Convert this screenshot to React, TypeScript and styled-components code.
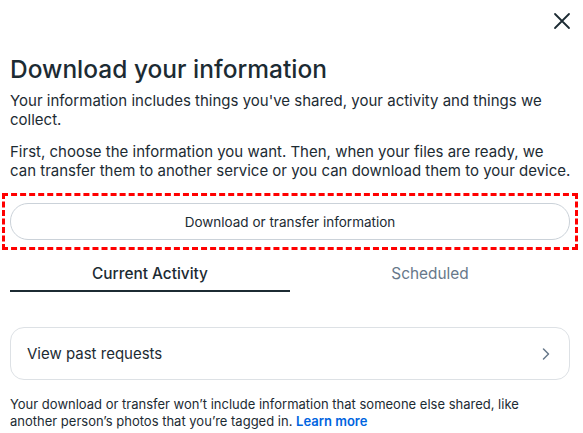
import styled, { createGlobalStyle } from "styled-components";

const GlobalStyle = createGlobalStyle`
  * {
    box-sizing: border-box;
  }
  body {
    margin: 0;
    background: #ffffff;
    font-family: Inter, "Noto Sans", sans-serif;
    color: #1c2b33;
  }
`;

const Panel = styled.div`
  width: 583px;
  padding: 0 13px 0 10px;
  display: flex;
  flex-direction: column;
  & > * {
    flex-shrink: 0;
  }
`;

const TopBar = styled.div`
  height: 53px;
  display: flex;
  justify-content: flex-end;
  align-items: flex-start;
  padding-top: 11px;
  margin-right: -2px;
`;

const CloseButton = styled.button`
  width: 20px;
  height: 20px;
  padding: 0;
  border: none;
  background: none;
  display: flex;
  align-items: center;
  justify-content: center;
  cursor: pointer;
`;

const Title = styled.h1`
  margin: 0 0 6px;
  font-size: 24.5px;
  font-weight: 500;
  line-height: 32px;
`;

const Text = styled.p`
  margin: 0 -3px 13px 0;
  font-size: 15px;
  line-height: 19px;
`;

const Highlight = styled.div`
  margin: 0 -8px;
  padding: 7px 5px;
  border: 3px dashed #ff0000;
`;

const WideButton = styled.button`
  width: 100%;
  height: 37px;
  border: 1px solid #cbd2d9;
  border-radius: 18px;
  background: #ffffff;
  font-family: inherit;
  font-size: 13.5px;
  color: #1c2b33;
  cursor: pointer;
`;

const Tabs = styled.div`
  display: grid;
  grid-template-columns: 1fr 1fr;
  margin-top: 7px;
`;

const Tab = styled.div<{ $active?: boolean }>`
  height: 35px;
  display: flex;
  align-items: center;
  justify-content: center;
  font-size: 15.4px;
  font-weight: ${({ $active }) => ($active ? 500 : 400)};
  color: ${({ $active }) => ($active ? "#1c2b33" : "#67788a")};
  border-bottom: 2px solid
    ${({ $active }) => ($active ? "#1c2b33" : "transparent")};
`;

const Card = styled.button`
  margin-top: 35px;
  height: 53px;
  width: 100%;
  padding: 0 18px 0 16px;
  display: flex;
  align-items: center;
  justify-content: space-between;
  border: 1px solid #dde1e5;
  border-radius: 14px;
  background: #ffffff;
  font-family: inherit;
  font-size: 15px;
  color: #1c2b33;
  cursor: pointer;
`;

const Note = styled.p`
  margin: 16px 0 0;
  max-width: 535px;
  font-size: 13px;
  line-height: 17px;
`;

const LearnMore = styled.a`
  color: #0064e0;
  font-weight: 600;
  text-decoration: none;
`;

const App = () => {
  return (
    <>
      <GlobalStyle />
      <Panel>
        <TopBar>
          <CloseButton aria-label="Close">
            <svg width="18" height="18" viewBox="0 0 18 18">
              <path
                d="M2 2 L16 16 M16 2 L2 16"
                stroke="#1c2b33"
                strokeWidth="1.8"
                strokeLinecap="round"
              />
            </svg>
          </CloseButton>
        </TopBar>
        <Title>Download your information</Title>
        <Text>
          Your information includes things you've shared, your activity and
          things we collect.
        </Text>
        <Text>
          First, choose the information you want. Then, when your files are
          ready, we can transfer them to another service or you can download
          them to your device.
        </Text>
        <Highlight>
          <WideButton>Download or transfer information</WideButton>
        </Highlight>
        <Tabs>
          <Tab $active>Current Activity</Tab>
          <Tab>Scheduled</Tab>
        </Tabs>
        <Card>
          <span>View past requests</span>
          <svg width="10" height="14" viewBox="0 0 10 14">
            <path
              d="M2.5 2 L7.5 7 L2.5 12"
              fill="none"
              stroke="#67788a"
              strokeWidth="1.5"
              strokeLinecap="round"
              strokeLinejoin="round"
            />
          </svg>
        </Card>
        <Note>
          Your download or transfer won’t include information that someone else
          shared, like another person’s photos that you’re tagged in.{" "}
          <LearnMore href="#">Learn more</LearnMore>
        </Note>
      </Panel>
    </>
  );
};

export default App;
